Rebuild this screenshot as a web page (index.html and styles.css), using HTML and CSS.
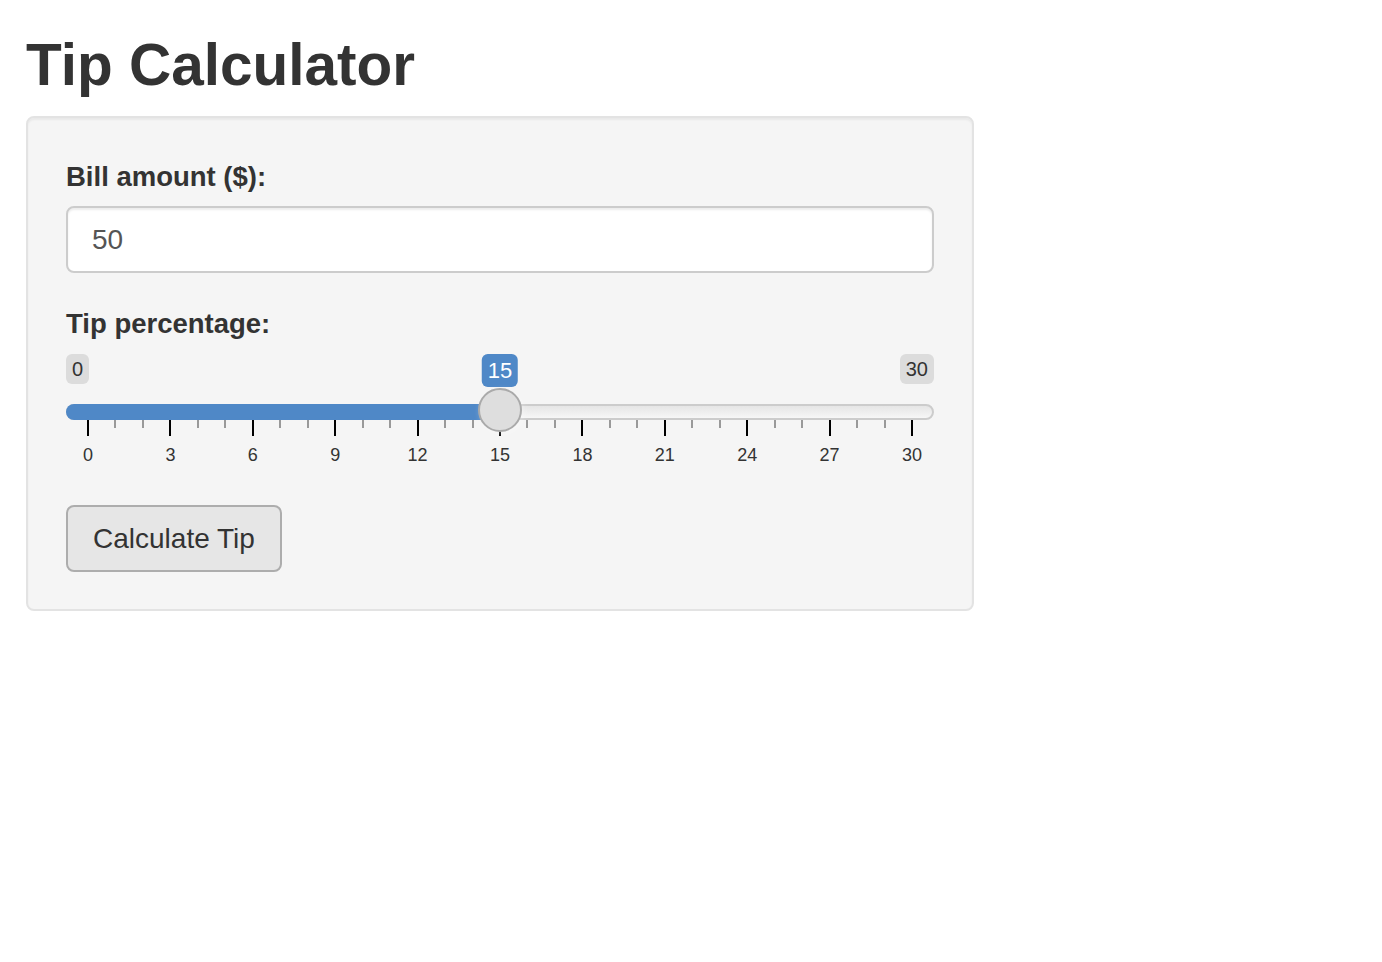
FILE: index.html
```html
<!DOCTYPE html>
<html lang="en">
<head>
<meta charset="utf-8">
<title>Tip Calculator</title>
<link rel="stylesheet" href="styles.css">
</head>
<body>
<div class="page">
  <h2 class="title">Tip Calculator</h2>
  <div class="well">
    <div class="form-group">
      <label class="label" for="bill">Bill amount ($):</label>
      <input id="bill" class="form-control" type="text" value="50">
    </div>
    <div class="form-group">
      <label class="label">Tip percentage:</label>
      <div class="irs">
        <span class="irs-min">0</span>
        <span class="irs-max">30</span>
        <span class="irs-line"></span>
        <span class="irs-bar" style="width: 434px"></span>
        <span class="irs-grid">
          <span class="pol" style="left:0%"></span>
          <span class="pol small" style="left:3.3333%"></span>
          <span class="pol small" style="left:6.6667%"></span>
          <span class="pol" style="left:10%"></span>
          <span class="pol small" style="left:13.3333%"></span>
          <span class="pol small" style="left:16.6667%"></span>
          <span class="pol" style="left:20%"></span>
          <span class="pol small" style="left:23.3333%"></span>
          <span class="pol small" style="left:26.6667%"></span>
          <span class="pol" style="left:30%"></span>
          <span class="pol small" style="left:33.3333%"></span>
          <span class="pol small" style="left:36.6667%"></span>
          <span class="pol" style="left:40%"></span>
          <span class="pol small" style="left:43.3333%"></span>
          <span class="pol small" style="left:46.6667%"></span>
          <span class="pol" style="left:50%"></span>
          <span class="pol small" style="left:53.3333%"></span>
          <span class="pol small" style="left:56.6667%"></span>
          <span class="pol" style="left:60%"></span>
          <span class="pol small" style="left:63.3333%"></span>
          <span class="pol small" style="left:66.6667%"></span>
          <span class="pol" style="left:70%"></span>
          <span class="pol small" style="left:73.3333%"></span>
          <span class="pol small" style="left:76.6667%"></span>
          <span class="pol" style="left:80%"></span>
          <span class="pol small" style="left:83.3333%"></span>
          <span class="pol small" style="left:86.6667%"></span>
          <span class="pol" style="left:90%"></span>
          <span class="pol small" style="left:93.3333%"></span>
          <span class="pol small" style="left:96.6667%"></span>
          <span class="pol" style="left:100%"></span>
          <span class="gtext" style="left:0%">0</span>
          <span class="gtext" style="left:10%">3</span>
          <span class="gtext" style="left:20%">6</span>
          <span class="gtext" style="left:30%">9</span>
          <span class="gtext" style="left:40%">12</span>
          <span class="gtext" style="left:50%">15</span>
          <span class="gtext" style="left:60%">18</span>
          <span class="gtext" style="left:70%">21</span>
          <span class="gtext" style="left:80%">24</span>
          <span class="gtext" style="left:90%">27</span>
          <span class="gtext" style="left:100%">30</span>
        </span>
        <span class="irs-single" style="left: 434px">15</span>
        <span class="irs-handle" style="left: 412px"></span>
      </div>
    </div>
    <button class="btn" type="button">Calculate Tip</button>
  </div>
</div>
</body>
</html>
```

FILE: styles.css
```css
html, body {
  margin: 0;
  padding: 0;
  background: #fff;
}

body {
  font-family: "Liberation Sans", Arial, Helvetica, sans-serif;
  color: #333;
}

.page {
  padding: 0 26px;
}

.title {
  margin: 32px 0 18px;
  font-size: 58.5px;
  line-height: 66px;
  font-weight: 700;
  color: #333;
}

.well {
  width: 948px;
  box-sizing: border-box;
  background: #f5f5f5;
  border: 2px solid #e3e3e3;
  border-radius: 8px;
  box-shadow: inset 0 2px 2px rgba(0, 0, 0, 0.05);
  padding: 38px 38px 37px;
}

.form-group {
  margin-bottom: 30px;
}

.label {
  display: block;
  font-size: 27.5px;
  line-height: 41px;
  font-weight: 700;
  margin-bottom: 9px;
  color: #333;
}

.form-group + .form-group .label {
  margin-bottom: 10px;
}

.form-control {
  display: block;
  width: 100%;
  height: 67px;
  box-sizing: border-box;
  padding: 0 24px;
  font-family: inherit;
  font-size: 28px;
  color: #555;
  background: #fff;
  border: 2px solid #ccc;
  border-radius: 8px;
  box-shadow: inset 0 2px 2px rgba(0, 0, 0, 0.075);
  outline: none;
}

.irs {
  position: relative;
  height: 121px;
  font-family: "Liberation Sans", Arial, sans-serif;
}

.irs-min,
.irs-max {
  position: absolute;
  top: 0;
  font-size: 20px;
  line-height: 26px;
  padding: 2px 6px;
  color: #333;
  background: rgba(0, 0, 0, 0.1);
  border-radius: 6px;
}

.irs-min {
  left: 0;
}

.irs-max {
  right: 0;
}

.irs-single {
  position: absolute;
  top: 0;
  transform: translateX(-50%);
  font-size: 22px;
  line-height: 29px;
  padding: 2px 6px;
  color: #fff;
  background: #4f88c7;
  border-radius: 6px;
}

.irs-line {
  position: absolute;
  left: 0;
  right: 0;
  top: 50px;
  height: 16px;
  box-sizing: border-box;
  border: 2px solid #ccc;
  border-radius: 16px;
  background: linear-gradient(to bottom, #ddd -50%, #fff 150%);
}

.irs-bar {
  position: absolute;
  left: 0;
  top: 50px;
  height: 16px;
  background: #4f88c7;
  border-radius: 16px 0 0 16px;
}

.irs-handle {
  position: absolute;
  top: 34px;
  width: 44px;
  height: 44px;
  box-sizing: border-box;
  border: 2px solid #aaa;
  border-radius: 50%;
  background: #dedede;
  box-shadow: 2px 2px 6px rgba(255, 255, 255, 0.3);
}

.irs-grid {
  position: absolute;
  left: 22px;
  right: 22px;
  top: 66px;
  height: 55px;
}

.pol {
  position: absolute;
  top: 0;
  width: 2px;
  height: 16px;
  margin-left: -1px;
  background: #000;
}

.pol.small {
  height: 8px;
  background: #999;
}

.gtext {
  position: absolute;
  top: 25px;
  transform: translateX(-50%);
  font-size: 18px;
  line-height: 20px;
  color: #333;
  white-space: nowrap;
}

.btn {
  display: block;
  height: 67px;
  box-sizing: border-box;
  padding: 0 25px;
  font-family: "Liberation Sans", Arial, sans-serif;
  font-size: 28px;
  color: #333;
  background: #e6e6e6;
  border: 2px solid #adadad;
  border-radius: 8px;
  cursor: pointer;
}
```
